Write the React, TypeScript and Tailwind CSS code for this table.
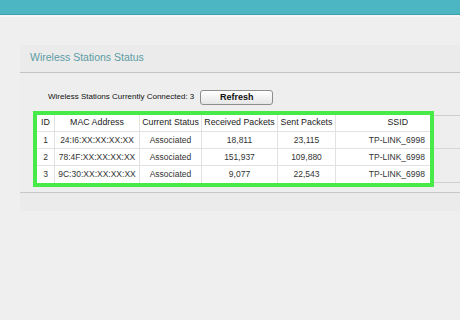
import React from "react";

const rows = [
  ["1", "24:I6:XX:XX:XX:XX", "Associated", "18,811", "23,115", "TP-LINK_6998"],
  ["2", "78:4F:XX:XX:XX:XX", "Associated", "151,937", "109,880", "TP-LINK_6998"],
  ["3", "9C:30:XX:XX:XX:XX", "Associated", "9,077", "22,543", "TP-LINK_6998"],
];

const headers = ["ID", "MAC Address", "Current Status", "Received Packets", "Sent Packets", "SSID"];

export default function App() {
  return (
    <div
      className="w-[460px] h-[320px] overflow-hidden bg-[#efefef] text-[#222]"
      style={{ fontFamily: '"Liberation Sans", Arial, sans-serif' }}
    >
      <div className="h-[15px] bg-[#4cb7c3] border-b border-[#3e9fab]" />
      <div className="h-[2px] bg-[#f6f6f6]" />
      <div className="ml-[20px] mt-[28px]">
        <div className="h-[28px] bg-[#ebebeb] border-b border-[#c4c4c4] flex items-center pl-[10px] pb-[2px]">
          <span className="text-[10.5px] text-[#5b9ca4]">Wireless Stations Status</span>
        </div>
        <div className="relative bg-[#eeeeee] border-b border-[#c8c8c8] pt-[17px] pb-[5px]">
          <div className="flex items-center h-[14px] pl-[28px] gap-[6px]">
            <span className="text-[8px] text-[#111]">Wireless Stations Currently Connected: 3</span>
            <button className="w-[73px] h-[15px] rounded-[3px] border border-[#8d8d8d] bg-gradient-to-b from-[#ffffff] to-[#e6e6e6] text-[9px] font-bold leading-none text-[#111]">
              Refresh
            </button>
          </div>
          <div className="absolute left-[414px] right-0 top-[42px] h-px bg-[#cfcfcf]" />
          <div className="absolute left-[414px] right-0 top-[75px] h-px bg-[#d6d6d6]" />
          <div className="absolute left-[414px] right-0 top-[109px] h-px bg-[#cfcfcf]" />
          <div className="ml-[13px] mt-[7px] w-[401px] border-4 border-[#48ea48] bg-white">
            <div className="grid grid-cols-[18px_85px_62px_76px_58px_94px] text-[8.5px]">
              {headers.map((h, i) => (
                <div
                  key={h}
                  className={
                    "h-[17px] flex items-center border-b border-[#e2e2e2] text-[8.8px] text-[#222] " +
                    (i < 5 ? "border-r " : "") +
                    (i === 5 ? "justify-end pr-[22px]" : "justify-center")
                  }
                >
                  {h}
                </div>
              ))}
              {rows.map((r, ri) =>
                r.map((c, ci) => (
                  <div
                    key={ri + "-" + ci}
                    className={
                      "h-[17px] flex items-center border-[#e2e2e2] text-[#333] " +
                      (ri < 2 ? "border-b " : "") +
                      (ci < 5 ? "border-r " : "") +
                      (ci === 5 ? "justify-end pr-[5px]" : "justify-center")
                    }
                  >
                    {c}
                  </div>
                ))
              )}
            </div>
          </div>
        </div>
        <div className="h-[18px] bg-[#ebebeb]" />
      </div>
    </div>
  );
}
